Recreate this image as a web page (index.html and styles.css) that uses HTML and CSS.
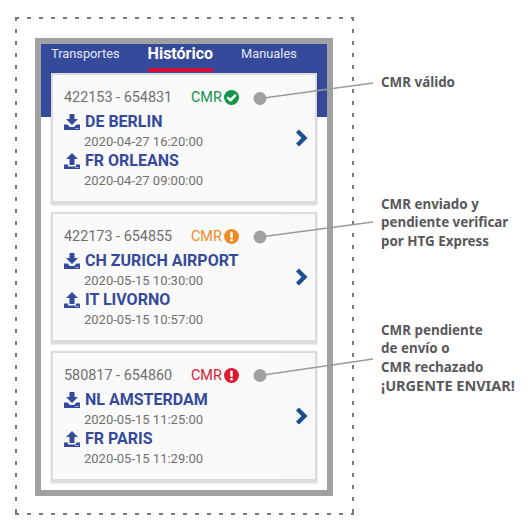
FILE: index.html
```html
<!DOCTYPE html>
<html>
<head>
  <title>Estados CMR</title>
  <link rel="stylesheet" href="styles.css">
</head>
<body>
  <svg class="defs" width="0" height="0">
    <symbol id="icon-download" viewBox="0 0 16 16">
      <path d="M5.500 0h5v5H14l-6 6-6-6h3.500z"/>
      <path d="M0 10.500h3.500L6 13h4l2.500-2.500H16V16H0z"/>
      <path class="hole" d="M11.500 14h1v1h-1zM13.500 14h1v1h-1z"/>
    </symbol>
    <symbol id="icon-upload" viewBox="0 0 16 16">
      <path d="M8 0l6 6h-3.500v6h-5V6H2z"/>
      <path d="M0 11.500h4v2h8v-2h4V16H0z"/>
      <path class="hole" d="M11.500 14h1v1h-1zM13.500 14h1v1h-1z"/>
    </symbol>
    <symbol id="icon-chevron" viewBox="0 0 13 18">
      <path d="M1 3.500L4 .500 12.500 9 4 17.500l-3-3L6.500 9z"/>
    </symbol>
  </svg>

  <div class="frame">
    <div class="phone">
      <div class="app-bar">
        <div class="tabs">
          <span class="tab">Transportes</span>
          <span class="tab tab-active">Histórico</span>
          <span class="tab">Manuales</span>
        </div>
      </div>

      <div class="cards">
        <div class="card">
          <div class="card-body">
            <div class="card-top">
              <span class="card-id">422153 - 654831</span>
              <span class="status status-ok">CMR
                <svg viewBox="0 0 15 15"><circle cx="7.500" cy="7.500" r="7.500"/><path class="mark" d="M4 7.800l2.500 2.500L11 5.500"/></svg>
              </span>
            </div>
            <div class="place place-first"><svg class="place-icon"><use href="#icon-download"/></svg>DE BERLIN</div>
            <div class="date">2020-04-27 16:20:00</div>
            <div class="place"><svg class="place-icon"><use href="#icon-upload"/></svg>FR ORLEANS</div>
            <div class="date">2020-04-27 09:00:00</div>
          </div>
          <div class="card-go"><svg class="chevron"><use href="#icon-chevron"/></svg></div>
        </div>

        <div class="card">
          <div class="card-body">
            <div class="card-top">
              <span class="card-id">422173 - 654855</span>
              <span class="status status-wait">CMR
                <svg viewBox="0 0 15 15"><circle cx="7.500" cy="7.500" r="7.500"/><path class="mark" d="M7.500 3.800v4"/><circle class="dot" cx="7.500" cy="11.200" r="1.400"/></svg>
              </span>
            </div>
            <div class="place place-first"><svg class="place-icon"><use href="#icon-download"/></svg>CH ZURICH AIRPORT</div>
            <div class="date">2020-05-15 10:30:00</div>
            <div class="place"><svg class="place-icon"><use href="#icon-upload"/></svg>IT LIVORNO</div>
            <div class="date">2020-05-15 10:57:00</div>
          </div>
          <div class="card-go"><svg class="chevron"><use href="#icon-chevron"/></svg></div>
        </div>

        <div class="card">
          <div class="card-body">
            <div class="card-top">
              <span class="card-id">580817 - 654860</span>
              <span class="status status-bad">CMR
                <svg viewBox="0 0 15 15"><circle cx="7.500" cy="7.500" r="7.500"/><path class="mark" d="M7.500 3.800v4"/><circle class="dot" cx="7.500" cy="11.200" r="1.400"/></svg>
              </span>
            </div>
            <div class="place place-first"><svg class="place-icon"><use href="#icon-download"/></svg>NL AMSTERDAM</div>
            <div class="date">2020-05-15 11:25:00</div>
            <div class="place"><svg class="place-icon"><use href="#icon-upload"/></svg>FR PARIS</div>
            <div class="date">2020-05-15 11:29:00</div>
          </div>
          <div class="card-go"><svg class="chevron"><use href="#icon-chevron"/></svg></div>
        </div>
      </div>
    </div>
  </div>

  <!-- lineas de las notas -->
  <svg class="leaders" width="530" height="530">
    <path d="M260 98.500L373 83M260 237L373 222M260 375.500L373 359"/>
    <circle cx="260" cy="98.500" r="6.500"/>
    <circle cx="260" cy="237" r="6.500"/>
    <circle cx="260" cy="375.500" r="6.500"/>
  </svg>

  <p class="note note-valid">CMR válido</p>
  <p class="note note-sent">CMR enviado y<br>pendiente verificar<br>por HTG Express</p>
  <p class="note note-urgent">CMR pendiente<br>de envío o<br>CMR rechazado<br><span class="note-shout">¡URGENTE ENVIAR!</span></p>
</body>
</html>
```

FILE: styles.css
```css
body {
  margin: 0;
  padding: 17px 0 0 15px;
  font-family: Roboto, sans-serif;
  background: #fff;
}

.defs {
  position: absolute;
}

.frame {
  box-sizing: border-box;
  width: 339px;
  height: 498px;
  padding: 20.500px 20px 0;
  background:
    repeating-linear-gradient(90deg, #777 0 4px, transparent 4px 12px) left top / 100% 2px no-repeat,
    repeating-linear-gradient(90deg, #777 0 4px, transparent 4px 12px) left bottom / 100% 2px no-repeat,
    repeating-linear-gradient(180deg, #777 0 4px, transparent 4px 12px) left top / 2px 100% no-repeat,
    repeating-linear-gradient(180deg, #777 0 4px, transparent 4px 12px) right top / 2px 100% no-repeat;
}

.phone {
  box-sizing: border-box;
  width: 298px;
  height: 458px;
  border: 6px solid #a0a1a3;
}

.app-bar {
  height: 73px;
  background: #354a9b;
}

.tabs {
  display: flex;
  height: 24px;
  padding-left: 10px;
}

.tab {
  margin-right: 28px;
  padding-top: 1px;
  font-size: 12.800px;
  line-height: 18px;
  color: #e4e7f3;
}

.tab-active {
  height: 23px;
  font-size: 16px;
  font-weight: 700;
  color: #fff;
  border-bottom: 4px solid #d0123a;
}

.cards {
  display: flex;
  flex-direction: column;
  gap: 8px;
  margin: -44px 10px 0;
}

.card {
  box-sizing: border-box;
  display: flex;
  height: 131px;
  background: #fafafa;
  border: 2px solid #dcdcdc;
  border-bottom-width: 3px;
  box-shadow: 0 1px 2px rgba(0, 0, 0, 0.2);
}

.card-body {
  flex: 1;
  padding: 13px 0 0 11px;
}

.card-top {
  display: flex;
  align-items: center;
  height: 20px;
  font-size: 14.400px;
  color: #6f6f6f;
}

.card-id {
  width: 127px;
}

.status {
  display: flex;
  align-items: center;
  gap: 2px;
}

.status svg {
  width: 15px;
  height: 15px;
}

.status .mark {
  fill: none;
  stroke: #fff;
  stroke-width: 2.600;
  stroke-linecap: round;
  stroke-linejoin: round;
}

.status .dot {
  fill: #fff;
}

.status-ok {
  color: #0f9548;
  fill: #0f9548;
}

.status-wait {
  color: #f08a24;
  fill: #f08a24;
}

.status-bad {
  color: #dd1a32;
  fill: #dd1a32;
}

.place {
  display: flex;
  align-items: center;
  height: 20px;
  font-size: 16px;
  font-weight: 700;
  color: #354a9b;
}

.place-first {
  margin-top: 4px;
}

.place-icon {
  width: 16px;
  height: 16px;
  margin-right: 5px;
  fill: #354a9b;
}

.hole {
  fill: #fafafa;
}

.date {
  height: 19.200px;
  padding-left: 20px;
  font-size: 13px;
  line-height: 19.200px;
  color: #707070;
}

.card-go {
  display: flex;
  align-items: center;
  width: 30px;
  background: #f8f8f8;
}

.chevron {
  width: 13px;
  height: 18px;
  margin-left: 10px;
  fill: #1b4f90;
}

.leaders {
  position: absolute;
  left: 0;
  top: 0;
}

.leaders path {
  fill: none;
  stroke: #999a9c;
  stroke-width: 1.500;
}

.leaders circle {
  fill: #a0a1a3;
}

.note {
  position: absolute;
  left: 381px;
  margin: 0;
  font-family: "Noto Sans", sans-serif;
  font-size: 13.400px;
  font-weight: 700;
  line-height: 18.300px;
  color: #58585a;
}

.note-shout {
  font-size: 14.500px;
}

.note-valid {
  top: 73px;
}

.note-sent {
  top: 195px;
}

.note-urgent {
  top: 321px;
}
```
